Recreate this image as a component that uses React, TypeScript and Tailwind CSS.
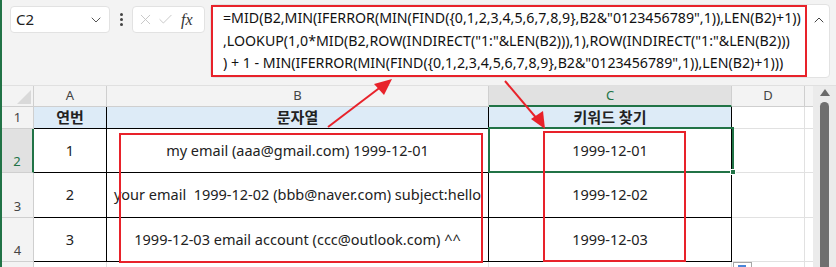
import React from 'react';
import { ChevronDown, ChevronUp, X, Check } from 'lucide-react';

const rows = [
  { n: '2', a: '1', b: 'my email (aaa@gmail.com) 1999-12-01', c: '1999-12-01', h: 'h-[44px]' },
  { n: '3', a: '2', b: 'your email  1999-12-02 (bbb@naver.com) subject:hello', c: '1999-12-02', h: 'h-[45px]' },
  { n: '4', a: '3', b: '1999-12-03 email account (ccc@outlook.com) ^^', c: '1999-12-03', h: 'h-[44px]' },
];

const formula = [
  '=MID(B2,MIN(IFERROR(MIN(FIND({0,1,2,3,4,5,6,7,8,9},B2&"0123456789",1)),LEN(B2)+1))',
  ',LOOKUP(1,0*MID(B2,ROW(INDIRECT("1:"&LEN(B2))),1),ROW(INDIRECT("1:"&LEN(B2)))',
  ') + 1 - MIN(IFERROR(MIN(FIND({0,1,2,3,4,5,6,7,8,9},B2&"0123456789",1)),LEN(B2)+1)))',
];

export default function App() {
  return (
    <div className="relative w-[836px] h-[267px] overflow-hidden bg-[#f3f3f3] border-l-2 border-[#217346] font-['Noto_Sans','Noto_Sans_CJK_KR',sans-serif] text-[#222]">
      {/* formula bar */}
      <div className="flex items-start h-[85px] pt-[6px]">
        <div className="ml-[8px] w-[100px] h-[27px] bg-white rounded-[4px] border border-[#e2e2e2] flex items-center justify-between pl-[5px] pr-[5px]">
          <span className="text-[15px] leading-none">C2</span>
          <ChevronDown className="w-4 h-4 text-[#555]" strokeWidth={1.5} />
        </div>
        <div className="w-[22px] h-[27px] flex flex-col items-center justify-center gap-[2px]">
          <span className="w-[3px] h-[3px] rounded-full bg-[#444]" />
          <span className="w-[3px] h-[3px] rounded-full bg-[#444]" />
          <span className="w-[3px] h-[3px] rounded-full bg-[#444]" />
        </div>
        <div className="w-[73px] h-[27px] bg-white rounded-[4px] border border-[#e2e2e2] flex items-center pl-[4px] gap-[3px]">
          <X className="w-[17px] h-[17px] text-[#c4c4c4]" strokeWidth={1.3} />
          <Check className="w-[17px] h-[17px] text-[#c4c4c4]" strokeWidth={1.3} />
          <span className="ml-[4px] font-['Liberation_Serif',serif] italic text-[16px] text-[#333] leading-none">fx</span>
        </div>
        <div className="-mt-[2px] ml-[5px] w-[620px] h-[74px] bg-white rounded-[4px] border border-[#e2e2e2] flex items-start">
          <div className="w-[596px] h-[72px] border-2 border-[#e8222a] pl-[10px] text-[14.2px] leading-[22.5px] text-[#111] whitespace-pre">
            {formula.map((l) => (
              <div key={l}>{l}</div>
            ))}
          </div>
          <ChevronUp className="ml-[4px] mt-[7px] w-4 h-4 text-[#444]" strokeWidth={1.5} />
        </div>
      </div>

      {/* sheet */}
      <div className="flex border-t border-[#e0e0e0]">
        <div className="flex flex-col">
          {/* column headers */}
          <div className="flex h-[21px] text-[13px] text-[#444]">
            <div className="w-[32px] border-r border-b border-[#cfcfcf] flex items-end justify-end pr-[2px] pb-[2px]">
              <div className="w-0 h-0 border-l-[14px] border-l-transparent border-b-[14px] border-b-[#d9d9d9]" />
            </div>
            <div className="w-[73px] border-r border-b border-[#cfcfcf] flex items-center justify-center">A</div>
            <div className="w-[382px] border-r border-b border-[#cfcfcf] flex items-center justify-center">B</div>
            <div className="w-[243px] border-r border-[#cfcfcf] border-b-2 border-b-[#217346] bg-[#e1e1e1] flex items-center justify-center text-[#217346]">C</div>
            <div className="w-[73px] border-r border-b border-[#cfcfcf] flex items-center justify-center">D</div>
            <div className="w-[8px] border-b border-[#cfcfcf]" />
          </div>
          {/* row 1 */}
          <div className="flex h-[22px]">
            <div className="w-[32px] border-r border-b border-[#cfcfcf] flex items-center justify-center text-[13px] text-[#444]">1</div>
            <div className="w-[73px] bg-[#ddebf7] border-r border-b border-black flex items-center justify-center font-bold text-[15px]">연번</div>
            <div className="w-[382px] bg-[#ddebf7] border-r border-b border-black flex items-center justify-center font-bold text-[15px]">문자열</div>
            <div className="w-[243px] bg-[#ddebf7] border-r border-b border-black flex items-center justify-center font-bold text-[15px]">키워드 찾기</div>
            <div className="w-[73px] bg-white border-r border-b border-[#e1e1e1]" />
            <div className="w-[8px] bg-white border-b border-[#e1e1e1]" />
          </div>
          {rows.map((r) => (
            <div key={r.n} className={`flex ${r.h}`}>
              <div
                className={
                  r.n === '2'
                    ? 'w-[32px] bg-[#e1e1e1] border-r-2 border-r-[#217346] border-b border-b-[#cfcfcf] flex items-end justify-center pb-[1px] text-[13px] text-[#217346]'
                    : 'w-[32px] border-r border-b border-[#cfcfcf] flex items-end justify-center pb-[1px] text-[13px] text-[#444]'
                }
              >
                {r.n}
              </div>
              <div className="w-[73px] bg-white border-r border-b border-black flex items-center justify-center text-[14.5px]">{r.a}</div>
              <div className="w-[382px] bg-white border-r border-b border-black flex items-center justify-center text-[14.5px] whitespace-pre overflow-hidden">{r.b}</div>
              <div className="w-[243px] bg-white border-r border-b border-black flex items-center justify-center text-[14.5px]">{r.c}</div>
              <div className="w-[73px] bg-white border-r border-b border-[#e1e1e1]" />
              <div className="w-[8px] bg-white border-b border-[#e1e1e1]" />
            </div>
          ))}
          {/* row 5 partial */}
          <div className="flex h-[20px]">
            <div className="w-[32px] border-r border-[#cfcfcf]" />
            <div className="w-[73px] bg-white border-r border-[#e1e1e1]" />
            <div className="w-[382px] bg-white border-r border-[#e1e1e1]" />
            <div className="w-[243px] bg-white border-r border-[#e1e1e1]" />
            <div className="w-[73px] bg-white border-r border-[#e1e1e1]" />
            <div className="w-[8px] bg-white" />
          </div>
        </div>
        {/* scrollbar */}
        <div className="w-[23px] flex flex-col items-center bg-[#ebebeb]">
          <div className="mt-[3px] w-0 h-0 border-l-[5px] border-l-transparent border-r-[5px] border-r-transparent border-b-[7px] border-b-[#6a6a6a]" />
          <div className="mt-[6px] w-[9px] flex-1 bg-[#6f6f6f] rounded-t-full" />
        </div>
      </div>

      {/* selection on C2 */}
      <div className="absolute left-[486px] top-[127px] w-[246px] h-[46px] border-2 border-[#217346]" />
      <div className="absolute left-[728px] top-[169px] w-[6px] h-[6px] bg-[#217346] border border-white" />

      {/* paste options icon */}
      <div className="absolute left-[731px] top-[262px] w-[19px] h-[10px] border border-[#a6a6a6] bg-white">
        <div className="ml-[4px] mt-[2px] w-[8px] h-[3px] bg-[#4a86d9]" />
      </div>

      {/* annotations */}
      <div className="absolute left-[117px] top-[133px] w-[364px] h-[130px] border-2 border-[#e8222a]" />
      <div className="absolute left-[541px] top-[131px] w-[143px] h-[131px] border-2 border-[#e8222a]" />
      <svg className="absolute left-0 top-0" width="836" height="267" viewBox="0 0 836 267">
        <line x1="326" y1="127" x2="380" y2="86" stroke="#e8222a" strokeWidth="2" />
        <polygon points="390,79 372,84 382,95" fill="#e8222a" />
        <line x1="503" y1="81" x2="536" y2="120" stroke="#e8222a" strokeWidth="2" />
        <polygon points="543,129 529,119 541,111" fill="#e8222a" />
      </svg>
    </div>
  );
}
